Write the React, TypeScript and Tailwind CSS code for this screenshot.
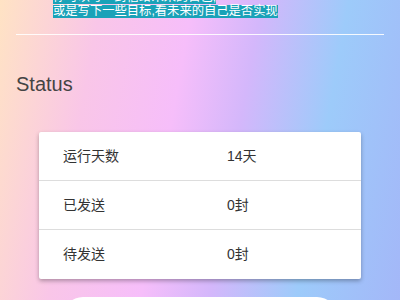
import React from "react";

const rows = [
  { label: "运行天数", value: "14天" },
  { label: "已发送", value: "0封" },
  { label: "待发送", value: "0封" },
];

export default function App() {
  return (
    <div
      className="min-h-screen w-full overflow-hidden bg-[linear-gradient(100deg,#ffe3c4_0%,#f9c6e8_22%,#f6befa_42%,#d4b7fb_57%,#9dcbfa_76%,#a4b6f8_100%)] font-['Liberation_Sans','Noto_Sans_CJK_SC',sans-serif]"
    >
      <div className="mt-[-9px] pl-[53px] text-[12.3px] leading-[13px] text-white">
        <div className="w-fit bg-[#1aa2b8]">你可以写一封信给未来的自己,</div>
        <div className="mt-[1px] w-fit bg-[#1aa2b8]">或是写下一些目标,看未来的自己是否实现</div>
      </div>
      <div className="mx-4 mt-[16px] h-px bg-white/90" />
      <h2 className="ml-4 mt-[37px] text-[20px] leading-[24px] text-[#444]">Status</h2>
      <div className="mx-[39px] mt-[36px] rounded-[2px] bg-white shadow-[0_2px_4px_rgba(0,0,0,0.3)]">
        {rows.map((r, i) => (
          <div
            key={r.label}
            className={`flex h-[49px] items-center pl-6 text-[14px] text-[#333] ${i < rows.length - 1 ? "border-b border-[#dddddd]" : ""}`}
          >
            <span className="w-[164px]">{r.label}</span>
            <span>{r.value}</span>
          </div>
        ))}
      </div>
      <div className="mx-[63px] mt-[18px] h-[40px] rounded-[20px] bg-white" />
    </div>
  );
}
